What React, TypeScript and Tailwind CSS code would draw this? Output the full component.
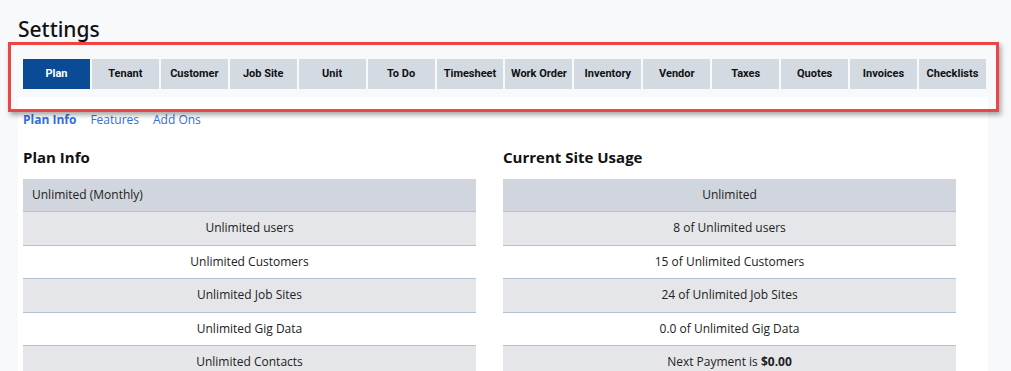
import React from 'react'

const tabs = ['Plan', 'Tenant', 'Customer', 'Job Site', 'Unit', 'To Do', 'Timesheet', 'Work Order', 'Inventory', 'Vendor', 'Taxes', 'Quotes', 'Invoices', 'Checklists']

const planRows = ['Unlimited users', 'Unlimited Customers', 'Unlimited Job Sites', 'Unlimited Gig Data', 'Unlimited Contacts']

const usageRows: React.ReactNode[] = [
    '8 of Unlimited users',
    '15 of Unlimited Customers',
    '24 of Unlimited Job Sites',
    '0.0 of Unlimited Gig Data',
    <span>Next Payment is <span className="font-bold">$0.00</span></span>,
]

const InfoTable = ({ title, header, rows, headerCenter }: { title: string, header: string, rows: React.ReactNode[], headerCenter?: boolean }) => {
    return (
        <div className="w-[453px]">
            <h2 className="text-[15px] font-bold text-[#111] h-[22px] leading-[22px]">{title}</h2>
            <div className="mt-[11px] text-[12px] text-[#222]">
                <div className={`h-[33px] flex items-center bg-[#d1d5dd] border-b border-[#b3c2ce] ${headerCenter ? 'justify-center' : 'px-[9px]'}`}>
                    {header}
                </div>
                {rows.map((row, i) => (
                    <div key={i} className={`h-[33.5px] flex items-center justify-center border-b border-[#b3c2ce] ${i % 2 === 0 ? 'bg-[#e5e6e9]' : 'bg-white'}`}>
                        {row}
                    </div>
                ))}
            </div>
        </div>
    )
}

const App = () => {
    return (
        <div className="relative w-[1011px] h-[371px] overflow-hidden bg-[#f8f9fb] font-['Open_Sans',sans-serif]">
            <h1 className="pl-[18px] pt-[15px] h-[47px] text-[21px] font-medium text-[#111] leading-[28px] font-['Noto_Sans',sans-serif]">Settings</h1>

            {/* tab bar */}
            <div className="ml-[23px] mt-[12px] w-[963px] flex gap-[2px] font-['Roboto',sans-serif]">
                {tabs.map((tab, i) => (
                    <div
                        key={tab}
                        className={`flex-1 h-[30px] flex items-center justify-center text-[11px] font-bold ${i === 0 ? 'bg-[#0b4a94] text-white' : 'bg-[#d3dae2] text-[#111]'}`}
                    >
                        {tab}
                    </div>
                ))}
            </div>

            {/* card */}
            <div className="ml-[18px] mt-[8px] w-[970px] h-[300px] bg-white pl-[5px]">
                <div className="flex gap-[14px] pt-[15px] text-[12px] text-[#2f6fe6] leading-[16px]">
                    <span className="font-bold">Plan Info</span>
                    <span>Features</span>
                    <span>Add Ons</span>
                </div>
                <div className="flex gap-[27px] mt-[18px]">
                    <InfoTable title="Plan Info" header="Unlimited (Monthly)" rows={planRows} />
                    <InfoTable title="Current Site Usage" header="Unlimited" rows={usageRows} headerCenter />
                </div>
            </div>

            {/* highlight annotation */}
            <div className="absolute left-[8px] top-[42px] w-[991px] h-[70px] border-[3px] border-[#ee4444] shadow-[2px_3px_5px_rgba(0,0,0,0.35)] pointer-events-none" />
        </div>
    )
}

export default App
